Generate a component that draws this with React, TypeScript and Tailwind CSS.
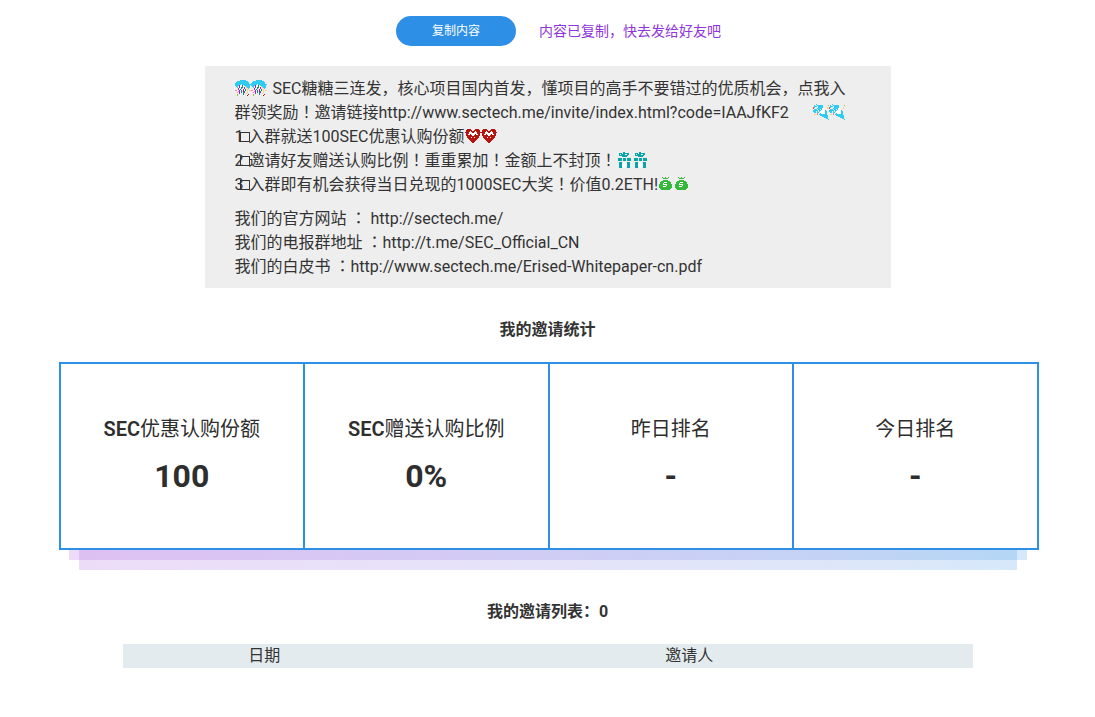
import { Fragment } from 'react';

type Sprite = { rows: string[]; label: string };

const palette: Record<string, string> = {
  c: '#2ecbf2',
  w: '#ffffff',
  p: '#a21fd0',
  m: '#ff7fae',
  y: '#ffd27a',
  g: '#0b8a7a',
  l: '#8fbf4d',
  r: '#b5140f',
  o: '#f0503c',
  t: '#0aa5aa',
  n: '#36b93a',
};

const ball: Sprite = {
  label: '彩球',
  rows: [
    '.....cccccc.....',
    '..ccccccccccc...',
    '.ccccccccccccc..',
    'cccccccccccccc..',
    'ccccccwccccccccc',
    'ccccpwwgwcccccc.',
    '.ccwpwwgwwycccc.',
    '..cwpwggwpwyccc.',
    '...p.wg.wp.y.c..',
    '...p.g..pwg.y...',
    'mm..pwg.p.g.y.yy',
    '...mp.g.pg..y...',
    '..m.pwg.gp..y...',
    '....p..wg..y....',
    '..l....wg....r..',
    '..l.........r...',
  ],
};

const popper: Sprite = {
  label: '礼炮',
  rows: [
    '...c............',
    '.c..cccccc.....l',
    '.ccc.ccccc......',
    'oc...ccccc....y.',
    'o...ccccc.w...y.',
    '.ccc.cc.cwww....',
    'ccccc.ccwwwwc...',
    'ccc.c.cwwwwwcc..',
    '.cc.cc.wwwwwcc..',
    '....m..cwwwwcc..',
    '.yy.m.cccccccc..',
    '.......cccccccc.',
    '.........cccccc.',
    '...........cccc.',
    '.............cc.',
    '...............c',
  ],
};

const heart: Sprite = {
  label: '爱心',
  rows: [
    '................',
    '..rrrr....rrrr..',
    '.rrrrrr..rrrrrr.',
    '.rrrrwrrrrwrrrr.',
    'rrrrwwwrrwwwrrrr',
    '.rrrwwwwwwwwrrr.',
    '.rrwwrwwwwrwwrr.',
    '.rrrrrrwwrrrrrr.',
    '..rrrrrrrrrrrr..',
    '..rrrrwrrwrrrr..',
    '...rrrrrrrrrr...',
    '....rrrrrrrr....',
    '.....rrrrrr.....',
    '......rrrr......',
    '.......rr.......',
  ],
};

const gift: Sprite = {
  label: '礼物',
  rows: [
    '......tt........',
    '..ttt.tttttt....',
    '..t.tttt..tt....',
    '..ttttttttt.....',
    '.....ttttt......',
    '................',
    '.tttt.ttt.tttt..',
    '.tttt.ttt.tttt..',
    '.tttt.ttt.tttt..',
    '................',
    '..ttt.www.ttt...',
    '..tttwwwwwttt...',
    '..tttwwwwwttt...',
    '..tttwwwwwttt...',
    '..tttwwwwwttt...',
    '..ttt.www.ttt...',
  ],
};

const bag: Sprite = {
  label: '钱袋',
  rows: [
    '................',
    '....n..n..n.....',
    '.....nnnnn......',
    '................',
    '.....nnnnn......',
    '...nnnnnnnnn....',
    '..nnnnwwwnnnn...',
    '..nnnwnnnnnnn...',
    '.nnnnwwwwnnnnn..',
    '.nnnnnnnwnnnnn..',
    '.nnnnwwwnnnnnn..',
    '.nnnnnnnnnnnnn..',
    '..nnnnnnnnnnn...',
    '...nnnnnnnnn....',
  ],
};

function Emoji({ sprite }: { sprite: Sprite }) {
  return (
    <svg
      role="img"
      aria-label={sprite.label}
      width="16"
      height="16"
      viewBox="0 0 16 16"
      shapeRendering="crispEdges"
      className="inline-block align-[-2px]"
    >
      {sprite.rows.flatMap((row, y) =>
        row.split('').map((key, x) =>
          key === '.' ? null : (
            <rect key={`${x}-${y}`} x={x} y={y} width="1" height="1" fill={palette[key]} />
          ),
        ),
      )}
    </svg>
  );
}

function Pair({ sprite }: { sprite: Sprite }) {
  return (
    <span className="whitespace-nowrap">
      <Emoji sprite={sprite} />
      <Emoji sprite={sprite} />
    </span>
  );
}

function Keycap({ digit }: { digit: string }) {
  return (
    <span className="inline-flex w-[14px] items-baseline">
      <span className="w-[5px]">{digit}</span>
      <span className="size-[10px] shrink-0 border border-[#333]" />
    </span>
  );
}

/** Sets full-width ！ and ： in the face that centres them in their cell. */
function Centred({ text }: { text: string }) {
  return (
    <>
      {text.split(/([！：])/).map((part, i) =>
        part === '！' || part === '：' ? (
          <span key={i} lang="zh-TW" className="font-['Roboto','Noto_Sans_CJK_TC',sans-serif]">
            {part}
          </span>
        ) : (
          <Fragment key={i}>{part}</Fragment>
        ),
      )}
    </>
  );
}

const stats = [
  { prefix: 'SEC', label: '优惠认购份额', value: '100' },
  { prefix: 'SEC', label: '赠送认购比例', value: '0%' },
  { prefix: '', label: '昨日排名', value: '-' },
  { prefix: '', label: '今日排名', value: '-' },
];

export default function App() {
  return (
    <main
      lang="zh-CN"
      className="bg-white px-4 pt-4 pb-12 font-['Roboto','Noto_Sans_CJK_SC',sans-serif] text-base text-[#333]"
    >
      <div className="mx-auto max-w-[980px]">
        <div className="flex items-center justify-center gap-[23px] pl-[22px]">
          <button type="button" className="h-[30px] w-[120px] rounded-full bg-[#2d8fe5] text-xs text-white">
            复制内容
          </button>
          <span className="text-sm text-[#8e35dd]">内容已复制，快去发给好友吧</span>
        </div>

        <section className="mx-auto mt-5 w-full max-w-[686px] space-y-[10px] bg-[#eee] pt-[11px] pr-[34px] pb-[9px] pl-[30px] leading-6">
          <p>
            <Pair sprite={ball} />
            <span className="ml-[2px]">
              <Centred text=" SEC糖糖三连发，核心项目国内首发，懂项目的高手不要错过的优质机会，点我入群领奖励！邀请链接http://www.sectech.me/invite/index.html?code=IAAJfKF2" />
            </span>
            <span className="ml-6">
              <Pair sprite={popper} />
            </span>
            <br />
            <Keycap digit="1" />
            入群就送100SEC优惠认购份额
            <Pair sprite={heart} />
            <br />
            <Keycap digit="2" />
            <Centred text="邀请好友赠送认购比例！重重累加！金额上不封顶！" />
            <Pair sprite={gift} />
            <br />
            <Keycap digit="3" />
            <Centred text="入群即有机会获得当日兑现的1000SEC大奖！价值0.2ETH!" />
            <Pair sprite={bag} />
          </p>
          <p>
            <Centred text="我们的官方网站 ： http://sectech.me/" />
            <br />
            <Centred text="我们的电报群地址 ：http://t.me/SEC_Official_CN" />
            <br />
            <Centred text="我们的白皮书 ：http://www.sectech.me/Erised-Whitepaper-cn.pdf" />
          </p>
        </section>

        <h2 className="mt-[30px] text-center leading-6 font-bold">我的邀请统计</h2>
      </div>

      <section className="mx-auto mt-5 max-w-[982px] pl-[2px]">
        <dl className="grid grid-cols-4 border-r-2 border-[#2d8fe5]">
          {stats.map((stat) => (
            <div
              key={stat.label}
              className="flex h-[188px] flex-col items-center gap-[11px] border-y-2 border-l-2 border-[#2d8fe5] pt-[49px] text-[#2e2e2e]"
            >
              <dt className="text-xl leading-8">
                <span className="font-semibold">{stat.prefix}</span>
                {stat.label}
              </dt>
              <dd className="text-[32px] leading-10 font-bold">{stat.value}</dd>
            </div>
          ))}
        </dl>
        <div className="mr-3 ml-[10px] bg-linear-to-r from-[#a24fdd]/20 to-[#2d8fe5]/20">
          <div className="mx-[10px] h-[10px] bg-linear-to-r from-[#a24fdd]/20 to-[#2d8fe5]/20" />
        </div>
        <div className="mr-[22px] ml-5 h-[10px] bg-linear-to-r from-[#a24fdd]/20 to-[#2d8fe5]/20" />
      </section>

      <h2 className="mt-[30px] text-center leading-6 font-bold">我的邀请列表：0</h2>

      <table className="mx-auto mt-5 w-full max-w-[850px] table-fixed border-collapse">
        <thead>
          <tr className="bg-[#e4ebee] leading-6">
            <th className="w-1/3 p-0 text-center font-normal">日期</th>
            <th className="p-0 text-center font-normal">邀请人</th>
          </tr>
        </thead>
      </table>
    </main>
  );
}
